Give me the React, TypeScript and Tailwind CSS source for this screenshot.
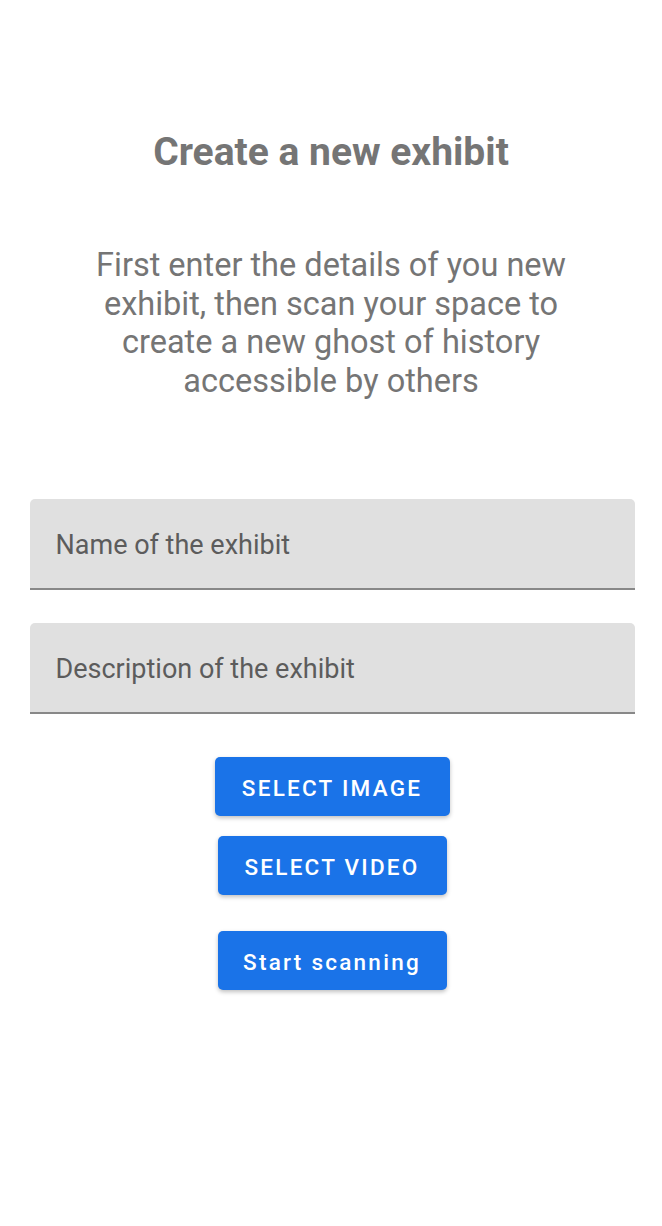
export default function App() {
  // exhibit creation form
  return (
    <div className="min-h-[1226px] bg-white flex flex-col items-center font-['Roboto',sans-serif]">
      <h1 className="mt-[130px] text-[39px] leading-[44px] font-bold text-[#757575]">Create a new exhibit</h1>

      <p className="mt-[72px] w-[500px] text-center text-[32.5px] leading-[38.5px] text-[#757575]">
        First enter the details of you new exhibit, then scan your space to create a new ghost of history accessible by others
      </p>

      <div className="mt-[99px] ml-[2px] w-[605px] flex flex-col gap-[33px]">
        <div className="h-[91px] bg-[#e0e0e0] rounded-t-[5px] border-b-2 border-[#888888] flex items-center px-[26px] pt-[4px]">
          <span className="text-[27px] text-[#5c5c5c]">Name of the exhibit</span>
        </div>
        <div className="h-[91px] bg-[#e0e0e0] rounded-t-[5px] border-b-2 border-[#888888] flex items-center px-[26px] pt-[4px]">
          <span className="text-[27px] text-[#5c5c5c]">Description of the exhibit</span>
        </div>
      </div>

      <button className="mt-[43px] ml-[2px] w-[235px] h-[59px] pt-[5px] rounded-[5px] bg-[#1a73e8] text-white text-[22.5px] font-medium tracking-[0.1em] shadow-[0_2px_4px_rgba(0,0,0,0.25)]">
        SELECT IMAGE
      </button>
      <button className="mt-[20px] ml-[2px] w-[229px] h-[59px] pt-[5px] rounded-[5px] bg-[#1a73e8] text-white text-[22.5px] font-medium tracking-[0.1em] shadow-[0_2px_4px_rgba(0,0,0,0.25)]">
        SELECT VIDEO
      </button>
      <button className="mt-[36px] ml-[2px] w-[229px] h-[59px] pt-[5px] rounded-[5px] bg-[#1a73e8] text-white text-[22.5px] font-medium tracking-[0.1em] shadow-[0_2px_4px_rgba(0,0,0,0.25)]">
        Start scanning
      </button>
    </div>
  )
}
